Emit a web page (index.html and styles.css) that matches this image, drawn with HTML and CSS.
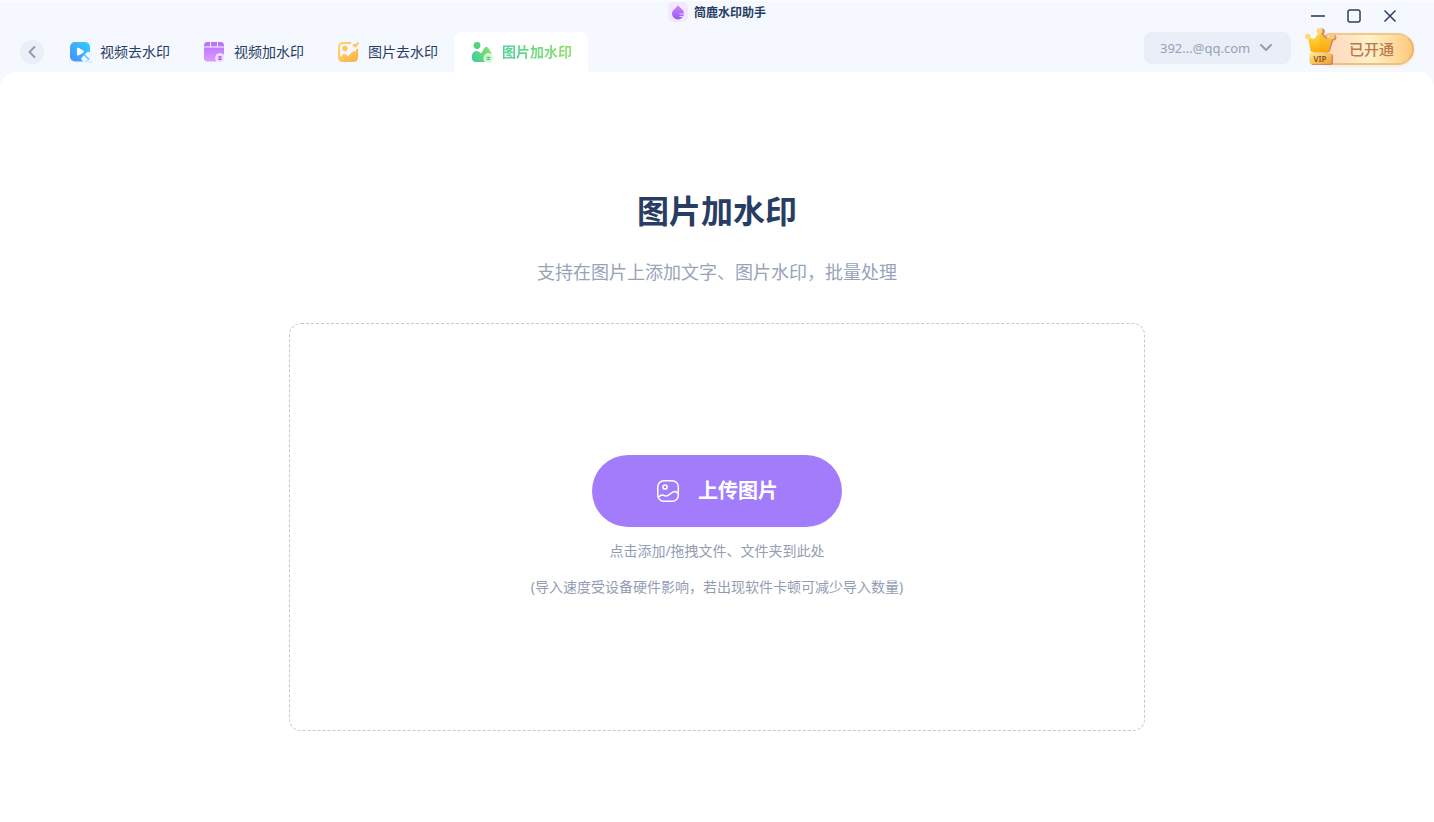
FILE: index.html
```html
<!DOCTYPE html>
<html lang="zh-CN">
<head>
<meta charset="utf-8">
<meta name="viewport" content="width=device-width, initial-scale=1">
<title>简鹿水印助手</title>
<link rel="stylesheet" href="styles.css">
</head>
<body>
<div class="app">
  <header class="topbar">
    <nav class="tabs">
      <button class="back" type="button" aria-label="返回">
        <svg width="24" height="24" viewBox="0 0 24 24" fill="none"><path d="M14.5 7 9.5 12l5 5" stroke="#8e9bb5" stroke-width="2" stroke-linecap="round" stroke-linejoin="round"/></svg>
      </button>
      <button class="tab" type="button">
        <svg class="tab-icon" viewBox="0 0 24 24">
          <defs><linearGradient id="blue" x1="1" y1="0" x2="0" y2="1"><stop offset="0" stop-color="#2fd0ff"/><stop offset="1" stop-color="#4a8cff"/></linearGradient></defs>
          <rect x="2" y="2" width="20" height="19.500" rx="5" fill="url(#blue)"/>
          <path d="M9 9.200c0-1.200.9-1.700 1.900-1.200l4.300 2.600c1 .6 1 1.500 0 2.100l-4.300 2.500c-1 .6-1.900.1-1.900-1z" fill="#fff"/>
          <g transform="rotate(45 18.500 17)"><rect x="15.500" y="11.500" width="6" height="11" rx="1.500" fill="#e4f6ff"/><path d="M15.500 17h6" stroke="#55b5ff" stroke-width="1.300"/></g>
          <path d="M17 22h7" stroke="#bfe4ff" stroke-width="1"/>
        </svg>
        <span>视频去水印</span>
      </button>
      <button class="tab" type="button">
        <svg class="tab-icon" viewBox="0 0 24 24">
          <defs><linearGradient id="violet" x1="0" y1="0" x2="0" y2="1"><stop offset="0" stop-color="#b76cff"/><stop offset="1" stop-color="#dc9cff"/></linearGradient></defs>
          <path d="M2 6.500V5.500Q2 2 5.500 2H8v4.500zM9 2h6v4.500H9zM16 2h2.500Q22 2 22 5.500v1h-6zM2 7.500h20V18q0 3.500-3.500 3.500h-13Q2 21.500 2 18z" fill="url(#violet)"/>
          <circle cx="18" cy="18" r="4.800" fill="#f8edff"/><circle cx="18" cy="18" r="3.600" fill="#edd5ff"/>
          <path d="M16.300 16.800h3.400M16.300 19.300h3.400M18 16.300v3.400" stroke="#a25af5" stroke-width="1.200"/>
        </svg>
        <span>视频加水印</span>
      </button>
      <button class="tab" type="button">
        <svg class="tab-icon" viewBox="0 0 24 24">
          <defs><linearGradient id="orange" x1="0" y1="0" x2="1" y2="1"><stop offset="0" stop-color="#ffd76b"/><stop offset="1" stop-color="#ffae45"/></linearGradient></defs>
          <path d="M15 3H7Q3 3 3 7v10q0 4 4 4h10q4 0 4-4V9" fill="none" stroke="url(#orange)" stroke-width="2"/>
          <path d="M3 17.500 7.500 14q1-.7 2 .2l1.500 1.300q1 .8 2-.2l4-4q1-.9 2 0l2 1.700v5q0 3-3 3H6q-3 0-3-3z" fill="url(#orange)"/>
          <circle cx="9" cy="8.500" r="2.700" fill="#ffc65a"/>
          <path d="m17.500 5.500 1.300-1M19.500 6.500 22 3" stroke="#ffc45d" stroke-width="2" stroke-linecap="round"/>
        </svg>
        <span>图片去水印</span>
      </button>
      <button class="tab tab-active" type="button" aria-current="page">
        <svg class="tab-icon" viewBox="0 0 24 24">
          <defs><linearGradient id="green" gradientUnits="userSpaceOnUse" x1="2" y1="18" x2="21" y2="6"><stop offset="0" stop-color="#42cf9a"/><stop offset="1" stop-color="#8de267"/></linearGradient></defs>
          <circle cx="7" cy="5.500" r="3.400" fill="#4fd281"/>
          <path d="M2 18v-3Q3 11 6.500 11q3 0 4.500 2.500l3-5Q16.300 5 18.600 8.500L22 14v4q0 4-4 4H6q-4 0-4-4z" fill="url(#green)"/>
          <circle cx="18.500" cy="18.300" r="5" fill="#eafbea"/><circle cx="18.500" cy="18.300" r="3.900" fill="#d4f6d8"/>
          <path d="M16.500 17.300h3.800M16.500 19.500h3.800M18.400 16.800v3.200" stroke="#55cf72" stroke-width="1.200"/>
        </svg>
        <span>图片加水印</span>
      </button>
    </nav>
    <div class="brand">
      <svg class="brand-icon" viewBox="0 0 20 20">
        <defs><linearGradient id="drop" x1="0" y1="0" x2="0" y2="1"><stop offset="0" stop-color="#cb82ff"/><stop offset="1" stop-color="#955cf8"/></linearGradient></defs>
        <rect width="20" height="20" rx="5" fill="#f3e9fe"/>
        <path d="M10 3c1 2.500 6 4.500 6 8.500a6 6 0 0 1-12 0C4 8 9 6 10 3z" fill="url(#drop)"/>
        <path d="M11.500 12h5M11.500 14.500h3.500" stroke="#e9d5ff" stroke-width="1"/>
      </svg>
      <span>简鹿水印助手</span>
    </div>
    <div class="side">
      <div class="window-controls">
        <button type="button" aria-label="最小化"><svg width="16" height="16" viewBox="0 0 16 16"><path d="M1 8h14" stroke="#526389" stroke-width="2"/></svg></button>
        <button type="button" aria-label="最大化"><svg width="16" height="16" viewBox="0 0 16 16"><rect x="2" y="2" width="12" height="12" rx="2" fill="none" stroke="#2b3d69" stroke-width="1.500"/></svg></button>
        <button type="button" aria-label="关闭"><svg width="16" height="16" viewBox="0 0 16 16"><path d="m2.500 2.500 11 11m0-11-11 11" stroke="#2b3d69" stroke-width="1.500"/></svg></button>
      </div>
      <div class="member">
        <button class="account" type="button">
          <span>392...@qq.com</span>
          <svg width="14" height="10" viewBox="0 0 14 10" fill="none"><path d="m2 2 5 5 5-5" stroke="#929eb5" stroke-width="2" stroke-linecap="round" stroke-linejoin="round"/></svg>
        </button>
        <button class="vip" type="button">
          <svg class="crown" viewBox="0 0 32 40">
            <defs>
              <linearGradient id="gold" x1="0" y1="0" x2="0" y2="1"><stop offset="0" stop-color="#ffe04f"/><stop offset="1" stop-color="#ffae0c"/></linearGradient>
              <linearGradient id="plate" x1="0" y1="0" x2="1" y2="1"><stop offset="0" stop-color="#ffed85"/><stop offset="1" stop-color="#f39b36"/></linearGradient>
            </defs>
            <g fill="#c99074">
              <circle cx="17" cy="4.500" r="2.900"/><circle cx="28.500" cy="10.500" r="2.900"/>
              <path d="m14 6 4.500 1 4 4 6.500 0-4 13q-1 1.500-3 1.500H8z"/>
            </g>
            <path d="M3 10.500 9 12 14.500 5l6 7 6.500-1.500-3.200 13q-.5 1.500-2 1.500H7.500q-1.500 0-2-1.500z" fill="url(#gold)"/>
            <path d="m14.500 5 6 7 6.500-1.500-3.200 13q-.5 1.500-2 1.500h-7.300z" fill="#f69b12" opacity=".3"/>
            <circle cx="2.900" cy="9.500" r="2.800" fill="#ffd873"/><circle cx="14.500" cy="4" r="2.900" fill="#ffd873"/><circle cx="27" cy="9.500" r="2.800" fill="#ffcb70"/>
            <rect x="6" y="27" width="22" height="11" rx="2" fill="#c98962"/>
            <rect x="4.500" y="26" width="22" height="11" rx="2" fill="url(#plate)"/>
            <text class="vip-mark" x="15" y="35" text-anchor="middle">VIP</text>
          </svg>
          <span class="vip-label">已开通</span>
        </button>
      </div>
    </div>
  </header>
  <main class="page">
    <h1 class="title">图片加水印</h1>
    <p class="subtitle">支持在图片上添加文字、图片水印，批量处理</p>
    <section class="dropzone">
      <button class="upload" type="button">
        <svg width="24" height="24" viewBox="0 0 24 24" fill="none" stroke="#fff" stroke-width="1.500" stroke-linecap="round" stroke-linejoin="round">
          <rect x="1.800" y="1.800" width="20.500" height="20.500" rx="6"/>
          <circle cx="9" cy="8" r="2.100"/>
          <path d="M2.500 18q3-2.800 5-1.800 3 1.800 5.500-.5l4-2.700q3-1.300 5 1.500"/>
        </svg>
        <span>上传图片</span>
      </button>
      <p class="hint">点击添加/拖拽文件、文件夹到此处</p>
      <p class="hint">(导入速度受设备硬件影响，若出现软件卡顿可减少导入数量)</p>
    </section>
  </main>
</div>
</body>
</html>
```

FILE: styles.css
```css
* {
  box-sizing: border-box;
}

body {
  margin: 0;
  background: #f5f8ff;
  color: #283d63;
  font-family: "Noto Sans", "Noto Sans CJK SC", sans-serif;
  font-size: 14px;
}

button {
  margin: 0;
  padding: 0;
  border: 0;
  background: none;
  color: inherit;
  font: inherit;
  cursor: pointer;
}

h1,
p {
  margin: 0;
}

svg {
  display: block;
  flex: none;
}

.app {
  display: flex;
  flex-direction: column;
  min-height: 100vh;
}

.topbar {
  display: grid;
  grid-template-columns: 1fr auto 1fr;
  box-shadow: inset 0 1px #fafcff;
}

.tabs {
  display: flex;
  align-items: center;
  align-self: end;
  height: 40px;
  padding-left: 20px;
}

.back {
  width: 24px;
  height: 24px;
  margin-right: 8px;
  border-radius: 50%;
  background: #e9eef7;
}

.tab {
  display: flex;
  align-items: center;
  gap: 8px;
  height: 40px;
  padding: 0 16px;
  border-radius: 8px 8px 0 0;
  line-height: 20px;
  white-space: nowrap;
}

.tab-icon {
  width: 24px;
  height: 24px;
}

.tab-active {
  background: #fff;
  font-weight: 700;
}

.tab-active span {
  background: linear-gradient(90deg, #50d29a, #91e36a);
  background-clip: text;
  color: transparent;
}

.brand {
  display: flex;
  align-items: center;
  gap: 6px;
  height: 24px;
  font-size: 12px;
  font-weight: 700;
}

.brand-icon {
  width: 20px;
  height: 20px;
}

.side {
  display: flex;
  flex-direction: column;
  align-items: flex-end;
}

.window-controls {
  display: flex;
  height: 32px;
  padding-right: 26px;
}

.window-controls button {
  display: grid;
  place-items: center;
  width: 36px;
}

.member {
  display: flex;
  gap: 14px;
  height: 40px;
  padding-right: 20px;
}

.account {
  display: flex;
  align-items: center;
  justify-content: space-between;
  gap: 8px;
  height: 32px;
  width: 147px;
  padding: 0 18px 0 16px;
  border-radius: 8px;
  background: #e9eef7;
  color: #96a2b9;
  font-size: 13px;
}

.vip {
  position: relative;
  height: 32px;
  margin-top: 1px;
  margin-left: 20px;
  padding: 0 18px 0 22px;
  border: 2px solid #f7ad67;
  border-top-color: #efc98b;
  border-bottom-color: #e8c47e;
  border-radius: 4px 16px 16px 4px;
  background: linear-gradient(90deg, #ffd5c0, #fff1c8 50%, #ffca7e);
  box-shadow: 0 1px 3px #f8e3c4;
  color: #b9784f;
  font-size: 15px;
  font-weight: 500;
  line-height: 26px;
}

.crown {
  position: absolute;
  left: -22px;
  bottom: -4px;
  width: 32px;
  height: 40px;
}

.vip-mark {
  fill: #855126;
  font-size: 8px;
  font-weight: 600;
}

.page {
  display: flex;
  flex: 1;
  flex-direction: column;
  align-items: center;
  padding: 115px 24px 91px;
  border-radius: 16px 16px 0 0;
  background: #fff;
  text-align: center;
}

.title {
  font-size: 32px;
  font-weight: 700;
  line-height: 48px;
}

.subtitle {
  margin-top: 24px;
  color: #98a3b9;
  font-size: 18px;
  line-height: 26px;
}

.dropzone {
  display: flex;
  flex: 1;
  flex-direction: column;
  align-items: center;
  justify-content: center;
  gap: 12px;
  width: 100%;
  max-width: 856px;
  margin-top: 38px;
  padding: 24px;
  border: 1px dashed #c8c8c8;
  border-radius: 12px;
}

.upload {
  display: flex;
  align-items: center;
  justify-content: center;
  gap: 18px;
  width: 250px;
  height: 72px;
  border-radius: 36px;
  background: #a27cfa;
  color: #fff;
  font-size: 20px;
  font-weight: 700;
  line-height: 28px;
}

.hint {
  color: #929db4;
  font-size: 14px;
  line-height: 24px;
}
```
